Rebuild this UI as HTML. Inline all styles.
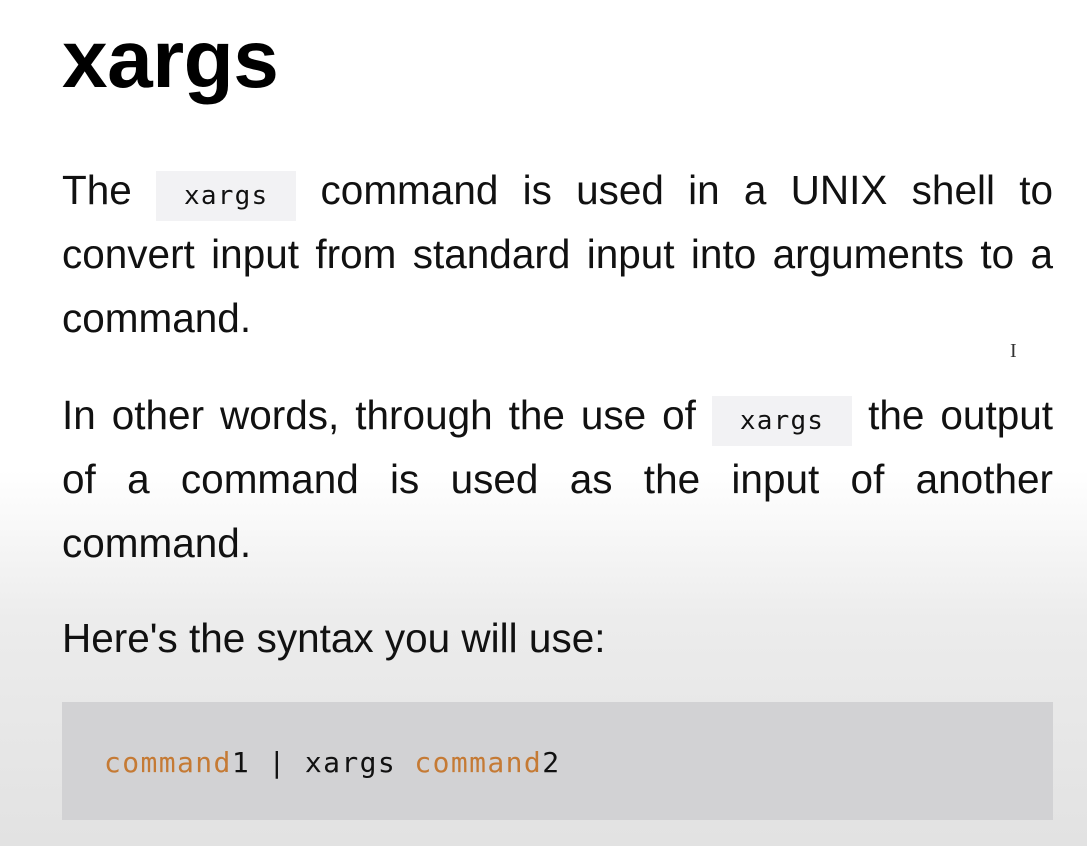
<!DOCTYPE html>
<html><head><meta charset="utf-8"><style>
html,body{margin:0;padding:0}
body{width:1087px;height:846px;overflow:hidden;position:relative;
background:linear-gradient(to bottom,#fff 0px,#fff 470px,#ececec 620px,#e2e2e2 846px);
font-family:"Liberation Sans",Arial,sans-serif;color:#111}
h1{position:absolute;left:62px;top:10px;margin:0;font-size:82px;font-weight:bold;line-height:100px;color:#000;letter-spacing:-0.5px}
.p{position:absolute;left:62px;width:991px;margin:0;font-size:40.5px;line-height:64px}
.p div{height:64px}
.j{text-align:justify;text-align-last:justify;white-space:nowrap}
code{font-family:"DejaVu Sans Mono","Liberation Mono",monospace;font-size:26px;line-height:0;letter-spacing:1.2px;background:#f2f2f4;padding:10px 28px;color:#111}
.pre{position:absolute;left:62px;top:702px;width:991px;height:118px;background:#d2d2d4;font-family:"DejaVu Sans Mono","Liberation Mono",monospace;font-size:28px;letter-spacing:1.4px;line-height:122px;color:#111}
.pre span.o{color:#c57a34}
.cur{position:absolute;left:1010px;top:340px;font-family:"Liberation Serif",serif;font-size:20px;color:#333}
</style></head><body>
<h1>xargs</h1>
<div class="p" style="top:158px">
<div class="j">The <code>xargs</code> command is used in a UNIX shell to</div>
<div class="j">convert input from standard input into arguments to a</div>
<div>command.</div>
</div>
<div class="p" style="top:383px">
<div class="j">In other words, through the use of <code>xargs</code> the output</div>
<div class="j">of a command is used as the input of another</div>
<div>command.</div>
</div>
<div class="p" style="top:606px">Here's the syntax you will use:</div>
<div class="pre"><span style="padding-left:42px"></span><span class="o">command</span>1 | xargs <span class="o">command</span>2</div>
<div class="cur">I</div>
</body></html>
